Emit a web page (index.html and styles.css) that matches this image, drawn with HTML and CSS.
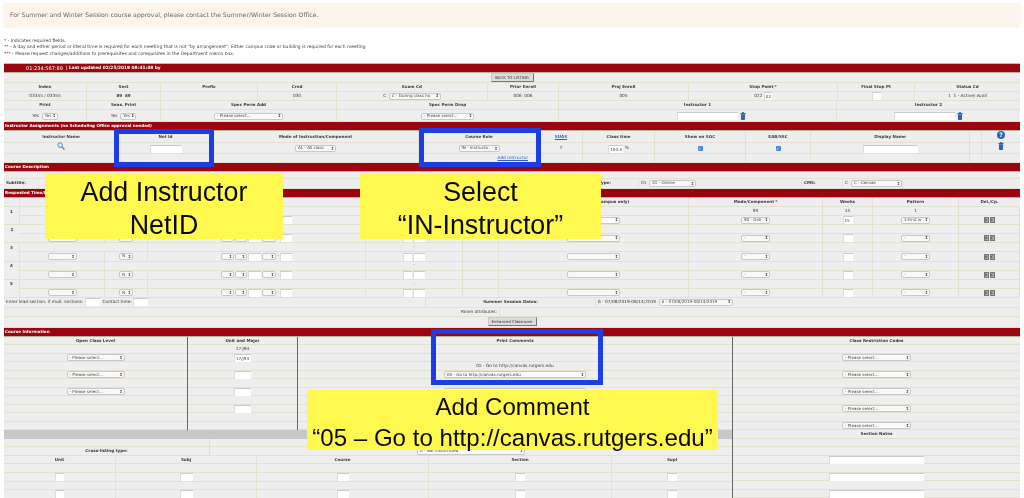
FILE: index.html
```html
<!DOCTYPE html>
<html lang="en">
<head>
<meta charset="utf-8">
<title>Course Maintenance</title>
<link rel="stylesheet" href="styles.css">
</head>
<body>
<svg class="defs" width="0" height="0" aria-hidden="true">
  <symbol id="trash" viewBox="0 0 6 9"><rect x="0" y="1" width="6" height="1.2" rx=".4" fill="#2f63b4"/><rect x="2" y="0" width="2" height="1.2" fill="#2f63b4"/><path d="M.6 2.4h4.8l-.3 6.2a.5.5 0 0 1-.5.4H1.4a.5.5 0 0 1-.5-.4z" fill="#2f63b4"/></symbol>
</svg>
<div class="page">
  <div class="notice">For Summer and Winter Session course approval, please contact the Summer/Winter Session Office.</div>
  <div class="legend">
    <p><b>*</b> - Indicates required fields.</p>
    <p><b>**</b> - A day and either period or literal time is required for each meeting that is not "by arrangement". Either campus code or building is required for each meeting</p>
    <p><b>***</b> - Please request changes/additions to prerequisites and corequisites in the Department memo box.</p>
  </div>

  <main class="form">
    <div class="bar bar-title"><span class="course">01:234:567:89</span><b>| Last updated 02/25/2019 08:41:48 by</b></div>
    <div class="row r-back"><button class="btn">BACK TO LISTING</button></div>
    <div class="row h9 top-a hd">
      <div>Index</div><div>Sect</div><div>Prefix</div><div>Cred</div><div>Exam Cd</div><div>Prior Enroll</div><div>Proj Enroll</div><div>Stop Point <i>*</i></div><div>Final Stop Pt</div><div>Status Cd</div>
    </div>
    <div class="row h9 top-a">
      <div>03355 / 03355</div><div class="bold">89&nbsp;&nbsp;89</div><div></div><div>030</div><div>C&nbsp;&nbsp;<span class="sel w52">C - During class ho</span></div><div>006&nbsp;&nbsp;006</div><div>005</div><div>022&nbsp;<input class="inp w8" value="022"></div><div><input class="inp w9"></div><div>1&nbsp;&nbsp;1 - Active/ Avail</div>
    </div>
    <div class="row h9 top-b hd">
      <div>Print</div><div>Seas. Print</div><div>Spec Perm Add</div><div>Spec Perm Drop</div><div>Instructor 1</div><div>Instructor 2</div>
    </div>
    <div class="row h12 top-b perm">
      <div>Yes&nbsp;&nbsp;<span class="sel w16">Yes</span></div><div>Yes&nbsp;&nbsp;<span class="sel w16">Yes</span></div><div><span class="sel w69">- Please select...</span></div><div><span class="sel w53">- Please select...</span></div>
      <div class="shift"><input class="inp w61"><svg class="ico-trash"><use href="#trash"/></svg></div><div><input class="inp w61"><svg class="ico-trash"><use href="#trash"/></svg></div>
    </div>

    <div class="bar">Instructor Assignments (no Scheduling Office approval needed)</div>
    <div class="row h11 inst hd inst-head">
      <div>Instructor Name</div><div>Net Id</div><div>Mode of Instruction/Component</div><div>Course Role</div><div class="link">SUAS</div><div>Class time</div><div>Show on SOC</div><div>EAB/SSC</div><div>Display Name</div><div></div>
      <div class="icon-cell"><svg class="ico-help" viewBox="0 0 8 8"><circle cx="4" cy="4" r="4" fill="#2f63b4"/><text x="4" y="6.2" text-anchor="middle" class="help-q">?</text></svg></div>
    </div>
    <div class="row h12 inst inst-data">
      <div class="icon-cell"><svg class="ico-search" viewBox="0 0 9 9"><circle cx="3.5" cy="3.5" r="2.6" fill="none" stroke="#3f7fd0" stroke-width="1"/><path d="M5.5 5.5L8.4 8.4" stroke="#3f7fd0" stroke-width="1.3"/></svg></div>
      <div><input class="inp w32"></div><div><span class="sel w41">AL - All class</span></div><div><span class="sel w41">IN - Instructo</span></div><div>Y</div><div><input class="inp w15" value="100.0">&nbsp;%</div>
      <div><span class="check">✓</span></div><div><span class="check">✓</span></div><div><input class="inp w55"></div><div></div><div class="icon-cell"><svg class="ico-trash"><use href="#trash"/></svg></div>
    </div>
    <div class="row h9 inst">
      <div></div><div></div><div></div><div class="link add-link">Add instructor</div><div></div><div></div><div></div><div></div><div></div><div></div><div></div>
    </div>

    <div class="bar">Course Description</div>
    <div class="row h7 full"><div></div></div>
    <div class="row h10 desc">
      <div class="left bold">Subtitle:</div><div class="type bold">Type:</div><div class="left">01&nbsp;&nbsp;<span class="sel w47">01 - Online</span></div><div class="left bold">CMS:</div><div class="left">C&nbsp;&nbsp;<span class="sel w52">C - Canvas</span></div><div></div>
    </div>

    <div class="bar">Requested Time/Location</div>
    <div class="row h9 time hd">
      <div></div><div>Day</div><div>By Arr.</div><div>Time</div><div>Campus</div><div>Bldg</div><div>Bldg/Room (main campus only)</div><div>Mode/Component <i>*</i></div><div>Weeks</div><div>Pattern</div><div>Del./Cp.</div>
    </div>
    <div class="time-grid">
      <div class="num bold">1</div>
      <div></div><div></div><div></div><div>-</div><div></div><div></div><div>90</div><div>15</div><div>1</div><div></div>
      <div><span class="sel w29"></span></div><div><span class="sel w14">N</span></div><div class="gap"><span class="sel w13"></span><span class="sel w12"></span><input class="inp w13"><span class="sel w14"></span>-<input class="inp w12"></div><div class="gap"><input class="inp w9"><input class="inp w12"></div><div></div><div><span class="sel w53"></span></div><div><span class="sel w29">90 - Onli</span></div><div><input class="inp w10" value="15"></div><div><span class="sel w29">1-First w</span></div><div class="gap"><span class="mini">x</span><span class="mini">c</span></div>

      <div class="num bold">2</div>
      <div></div><div></div><div></div><div>-</div><div></div><div></div><div></div><div></div><div></div><div></div>
      <div><span class="sel w29"></span></div><div><span class="sel w14">N</span></div><div class="gap"><span class="sel w13"></span><span class="sel w12"></span><input class="inp w13"><span class="sel w14"></span>-<input class="inp w12"></div><div class="gap"><input class="inp w9"><input class="inp w12"></div><div></div><div><span class="sel w53"></span></div><div><span class="sel w29">-</span></div><div><input class="inp w10"></div><div><span class="sel w29">-</span></div><div class="gap"><span class="mini">x</span><span class="mini">c</span></div>

      <div class="num bold">3</div>
      <div></div><div></div><div></div><div>-</div><div></div><div></div><div></div><div></div><div></div><div></div>
      <div><span class="sel w29"></span></div><div><span class="sel w14">N</span></div><div class="gap"><span class="sel w13"></span><span class="sel w12"></span><input class="inp w13"><span class="sel w14"></span>-<input class="inp w12"></div><div class="gap"><input class="inp w9"><input class="inp w12"></div><div></div><div><span class="sel w53"></span></div><div><span class="sel w29">-</span></div><div><input class="inp w10"></div><div><span class="sel w29">-</span></div><div class="gap"><span class="mini">x</span><span class="mini">c</span></div>

      <div class="num bold">4</div>
      <div></div><div></div><div></div><div>-</div><div></div><div></div><div></div><div></div><div></div><div></div>
      <div><span class="sel w29"></span></div><div><span class="sel w14">N</span></div><div class="gap"><span class="sel w13"></span><span class="sel w12"></span><input class="inp w13"><span class="sel w14"></span>-<input class="inp w12"></div><div class="gap"><input class="inp w9"><input class="inp w12"></div><div></div><div><span class="sel w53"></span></div><div><span class="sel w29">-</span></div><div><input class="inp w10"></div><div><span class="sel w29">-</span></div><div class="gap"><span class="mini">x</span><span class="mini">c</span></div>

      <div class="num bold">5</div>
      <div></div><div></div><div></div><div>-</div><div></div><div></div><div></div><div></div><div></div><div></div>
      <div><span class="sel w29"></span></div><div><span class="sel w14">N</span></div><div class="gap"><span class="sel w13"></span><span class="sel w12"></span><input class="inp w13"><span class="sel w14"></span>-<input class="inp w12"></div><div class="gap"><input class="inp w9"><input class="inp w12"></div><div></div><div><span class="sel w53"></span></div><div><span class="sel w29">-</span></div><div><input class="inp w10"></div><div><span class="sel w29">-</span></div><div class="gap"><span class="mini">x</span><span class="mini">c</span></div>
    </div>
    <div class="row h10 foot">
      <div class="left">Enter lead section, if mult. sections:&nbsp;<input class="inp w15">&nbsp;&nbsp;Contact time:&nbsp;<input class="inp w15"></div>
      <div class="bold dates">Summer Session Dates:</div>
      <div class="left">6 - 07/08/2019-08/14/2019&nbsp;&nbsp;<span class="sel w74">6 - 07/08/2019-08/14/2019</span></div>
    </div>
    <div class="row h9 foot2"><div class="right">Room attributes:</div><div></div></div>
    <div class="row h11 full"><div><button class="btn">Enhanced Classroom</button></div></div>

    <div class="bar">Course Information</div>
    <div class="info">
      <div class="info-left">
        <div class="info-cols">
          <div class="stack">
            <div class="bold">Open Class Level</div><div></div>
            <div><span class="sel w58">- Please select...</span></div><div></div>
            <div><span class="sel w58">- Please select...</span></div><div></div>
            <div><span class="sel w58">- Please select...</span></div><div></div><div></div><div></div><div></div>
          </div>
          <div class="stack dark">
            <div class="bold">Unit and Major</div><div>17:J94</div>
            <div><input class="inp w17" value="17/J94"></div><div></div>
            <div><input class="inp w17"></div><div></div>
            <div><input class="inp w17"></div><div></div>
            <div><input class="inp w17"></div><div></div><div></div>
          </div>
          <div class="stack">
            <div class="bold">Print Comments</div><div></div><div></div>
            <div>05 - Go to http://canvas.rutgers.edu</div>
            <div><span class="sel w142">05 - Go to http://canvas.rutgers.edu</span></div><div></div>
            <div><span class="sel w142">- Please select...</span></div><div></div><div></div><div></div><div></div>
          </div>
        </div>
        <div class="grey-bar"></div>
        <div class="row h8 split"><div></div><div></div></div>
        <div class="row h8 split"><div class="bold">Cross-listing type:</div><div><span class="sel w108">0 - Not cross-listed</span></div></div>
        <div class="row h8 xlist hd"><div>Unit</div><div>Subj</div><div>Course</div><div>Section</div><div>Supl</div></div>
        <div class="row h8 xlist"><div></div><div></div><div></div><div></div><div></div></div>
        <div class="row h8 xlist"><div><input class="inp w9"></div><div><input class="inp w13"></div><div><input class="inp w12"></div><div><input class="inp w10"></div><div><input class="inp w10"></div></div>
        <div class="row h8 xlist"><div></div><div></div><div></div><div></div><div></div></div>
        <div class="row h8 xlist"><div><input class="inp w9"></div><div><input class="inp w13"></div><div><input class="inp w12"></div><div><input class="inp w10"></div><div><input class="inp w10"></div></div>
      </div>
      <div class="stack info-right">
        <div class="bold">Class Restriction Codes</div><div></div>
        <div><span class="sel w69">- Please select...</span></div><div></div>
        <div><span class="sel w69">- Please select...</span></div><div></div>
        <div><span class="sel w69">- Please select...</span></div><div></div>
        <div><span class="sel w69">- Please select...</span></div><div></div>
        <div><span class="sel w69">- Please select...</span></div>
        <div class="bold">Section Notes</div><div></div><div></div>
        <div><input class="inp w95"></div><div></div>
        <div><input class="inp w95"></div><div></div>
        <div><input class="inp w95"></div>
      </div>
    </div>
  </main>

  <div class="frame frame-netid"></div>
  <div class="frame frame-role"></div>
  <div class="frame frame-comment"></div>
  <div class="callout call-netid">Add Instructor<br>NetID</div>
  <div class="callout call-role">Select<br>“IN-Instructor”</div>
  <div class="callout call-comment">Add Comment<br>“05 – Go to http://canvas.rutgers.edu”</div>
</div>
</body>
</html>
```
FILE: styles.css
```css
* { box-sizing: border-box; }
html, body { margin: 0; padding: 0; height: 498px; overflow: hidden; background: #fff; }
.defs { position: absolute; }
.page {
  position: relative; width: 1024px; height: 498px; overflow: hidden;
  font: 4.3px/1 "DejaVu Sans", sans-serif; color: #3c3c3c;
  filter: blur(.45px);
}
.notice {
  margin: 3px 3px 0 3px; height: 25px; padding: 0 7px;
  display: flex; align-items: center;
  background: #fdf4ec; border-radius: 3px;
  font-size: 6.15px; color: #666;
}
.legend { height: 35px; padding-top: 10.5px; padding-left: 4px; font-size: 4.48px; color: #444; }
.legend p { margin: 0 0 2.1px; line-height: 4.4px; }
.legend b { color: #c00; font-weight: normal; }

.form { margin: 0 4px; border-top: 1px solid #bbb; background: #eee; }
.bar {
  height: 9px; background: #9b0510; color: #fff; font-weight: bold;
  display: flex; align-items: center; padding-left: 1px; font-size: 4.1px;
  border-bottom: 1px solid #b8b49c;
}
.bar-title { padding-left: 22px; gap: 3px; font-size: 4.35px; }
.course { font-weight: normal; font-size: 5px; }

.row { display: grid; }
.row > div, .time-grid > div {
  display: flex; align-items: center; justify-content: center;
  min-width: 0; white-space: nowrap;
  border-right: 1px solid #e2e2ce; border-bottom: 1px solid #e2e2ce;
}
.row > div:last-child { border-right: 0; }
.h7 { height: 7px; } .h8 { height: 8.5px; } .h9 { height: 9px; } .h10 { height: 10px; } .h11 { height: 11px; } .h12 { height: 12px; }
.hd > div, .bold { font-weight: bold; font-size: 4.1px; }
.hd i { color: #c00; font-style: normal; padding-left: 1px; }
.row > .left { justify-content: flex-start; padding-left: 2px; }
.row > .right { justify-content: flex-end; padding-right: 2px; }
.row > .type { justify-content: flex-end; padding-right: 27px; }

.r-back { height: 10px; display: flex; align-items: center; justify-content: center; border-bottom: 1px solid #e2e2ce; }
.btn {
  padding: 0; height: 9px; width: 43px; font: 3.9px "DejaVu Sans", sans-serif; color: #333;
  background: #ddd; border: 1px solid; border-color: #ccc #777 #777 #ccc;
}
.top-a { grid-template-columns: 83px 74px 97px 79px 151px 71px 130px 149px 77px 105px; }
.top-b { grid-template-columns: 83px 74px 176px 222px 278px 183px; }
.perm > div { padding-top: 1px; }
.row > .shift { padding-left: 28px; padding-top: 0; }
.inst { grid-template-columns: 115px 94px 206px 121px 43px 72px 91px 65px 159px 12px 38px; }
.inst-head > div { padding-top: 2px; }
.inst-data > div { padding-top: 2px; }
.row > .icon-cell { padding-top: 0; padding-bottom: 3px; }
.row > .add-link { justify-content: flex-end; padding-right: 11px; }
.full { grid-template-columns: 1fr; }
.desc { grid-template-columns: 20px 615px 163px 41px 60px 1fr; }
.time, .time-grid { grid-template-columns: 16px 85px 43px 218px 97px 36px 190px 134px 50px 86px 61px; }
.time-grid { display: grid; grid-auto-rows: 9.1px; }
.time-grid > .num { grid-row: span 2; align-items: flex-start; padding-top: 2.5px; }
.time-grid > div:nth-child(22n) { border-right: 0; }
.gap { gap: 1px; }
.foot { grid-template-columns: 422px 170px 1fr; }
.foot2 { grid-template-columns: 496px 1fr; }
.full .btn { width: 49px; }

.sel {
  position: relative; display: inline-flex; align-items: center; height: 7px;
  padding: 0 4px 0 2px; overflow: hidden; white-space: nowrap;
  background: #f9f9f7; border: .5px solid #c8c8c8; border-radius: 2px;
  font-size: 4.1px; font-weight: normal; color: #444;
}
.sel::after {
  content: "\2195"; position: absolute; right: 1px; top: 0; bottom: 0; display: flex; align-items: center;
  font-size: 4px; font-weight: bold; color: #333; background: #f9f9f7;
}
.inp {
  height: 8px; padding: 0 1px; background: #fff; border: 0; border-top: .5px solid #ccc; border-left: .5px solid #ddd;
  border-radius: 0; font: 4.1px "DejaVu Sans", sans-serif; color: #444; outline: 0;
}
.w8 { width: 8px; } .w9 { width: 9px; } .w10 { width: 10px; } .w12 { width: 12px; } .w13 { width: 13px; } .w14 { width: 14px; }
.w15 { width: 15px; } .w16 { width: 16px; } .w17 { width: 17px; } .w29 { width: 29px; } .w32 { width: 32px; } .w41 { width: 41px; }
.w47 { width: 47px; } .w52 { width: 52px; } .w53 { width: 53px; } .w55 { width: 55px; } .w58 { width: 58px; } .w61 { width: 61px; }
.w69 { width: 69px; } .w74 { width: 74px; } .w95 { width: 95px; } .w108 { width: 108px; } .w142 { width: 142px; }
.ico-trash { width: 6px; height: 8px; margin-left: 2px; }
.icon-cell .ico-trash { margin-left: 0; }
.ico-help { width: 8px; height: 8px; }
.help-q { font: bold 6px "DejaVu Sans", sans-serif; fill: #fff; }
.ico-search { width: 8px; height: 8px; }
.check {
  width: 5px; height: 5px; display: flex; align-items: center; justify-content: center;
  background: #4f86d8; border-radius: 1px; color: #dce8fa; font-size: 4px;
}
.mini {
  width: 5px; height: 6px; display: flex; align-items: center; justify-content: center;
  background: #aaa; border: .5px solid #777; color: #222; font-size: 4px;
}
.link { color: #2a5fc8; text-decoration: underline; }

.info { display: grid; grid-template-columns: 729px 287px; }
.info-left { min-width: 0; border-right: 1px solid #666; }
.info-cols { display: grid; grid-template-columns: 183px 111px 1fr; }
.stack { display: grid; grid-auto-rows: 8.5px; align-content: start; }
.stack > div {
  display: flex; align-items: center; justify-content: center; white-space: nowrap;
  border-bottom: 1px solid #e2e2ce;
}
.stack.dark { border-left: 1px solid #666; border-right: 1px solid #666; }
.grey-bar { height: 8.5px; background: #c8c8c8; }
.split { grid-template-columns: 206px 1fr; }
.xlist { grid-template-columns: 112px 141px 172px 183px 1fr; }

.frame { position: absolute; border: 5.5px solid #1a3fe6; }
.frame-netid { left: 114px; top: 129px; width: 100px; height: 38px; }
.frame-role { left: 419px; top: 128px; width: 122px; height: 39px; }
.frame-comment { left: 431px; top: 329px; width: 172px; height: 56px; }
.callout {
  position: absolute; display: flex; align-items: center; justify-content: center; text-align: center;
  background: #fff94f; color: #0a0a0a; font: 26.8px/33px "Liberation Sans", Arial, sans-serif;
  white-space: nowrap; padding-top: 5px;
}
.call-netid { left: 45px; top: 173px; width: 238px; height: 66px; }
.call-role { left: 360px; top: 174px; width: 241px; height: 65px; }
.call-comment { left: 307px; top: 390px; width: 411px; height: 60px; font-size: 24.1px; line-height: 31px; padding-top: 4px; }
```
